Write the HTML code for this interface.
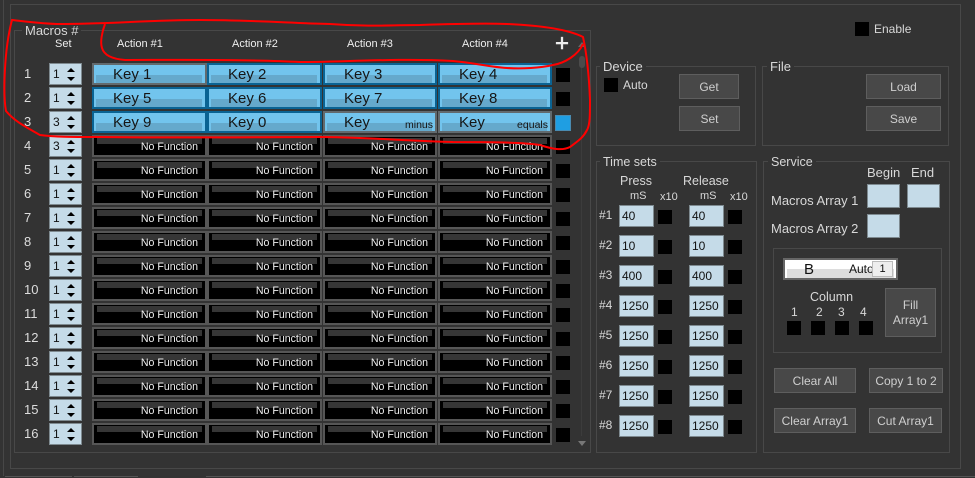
<!DOCTYPE html>
<html><head><meta charset="utf-8"><style>
html,body{margin:0;padding:0}
body{width:975px;height:478px;background:#333;overflow:hidden;position:relative;font-family:"Liberation Sans",sans-serif;color:#d8d8d8;font-size:12px}
div,span,u,i{position:absolute;box-sizing:border-box;text-decoration:none;font-style:normal;white-space:nowrap}
.g{border:1px solid #484848}
.t{background:#333;padding:0 3px;line-height:14px;font-size:13px}
.r{left:0;width:600px;height:22px}
.n{left:24px;top:3px;font-size:13px;line-height:15px;color:#ddd}
.sp{left:49px;top:0;width:33px;height:22px;background:#c5dbe8;border:1px solid #7e8a90;color:#111;font-size:12px;line-height:20px;padding-left:3px}
.sp:before,.sp:after{content:"";position:absolute;left:17px;border-left:4px solid transparent;border-right:4px solid transparent}
.sp:before{top:4px;border-bottom:4px solid #000}
.sp:after{top:13px;border-top:4px solid #000}
.f,.b{top:0;height:22px;width:115px}
.c1{left:92px}.c2{left:207px}.c3{left:323px;width:114px}.c4{left:438px;width:114px}
.f{border:2px solid #565656;background:linear-gradient(#363636,#363636) 3px 1px/calc(100% - 6px) 6px no-repeat,#000;color:#f0f0f0;font-size:10.6px;text-align:right;padding-right:7px;line-height:20px}
.b{border:2px solid #0a6393;background:linear-gradient(#65a9cc,#65a9cc) 2px 10px/calc(100% - 5px) 8px no-repeat,#72c4ed;color:#161616;font-size:15px;padding-left:19px;line-height:20px}
.o{border-color:#626a6e}
.b em{position:absolute;font-style:normal;font-size:10.5px;right:2px;top:5px;line-height:14px}
.k{width:14px;height:14px;background:#000}
.c{left:556px;top:5px}
.in{width:35px;height:22px;background:#c5dbe8;border:1px solid #7e8a90;color:#111;line-height:20px;padding-left:2px;font-size:12px}
.bt{background:#484848;border:1px solid #5e5e5e;color:#cfcfcf;text-align:center;font-size:12px;line-height:24px}
.l{line-height:14px}
.a{top:37px;font-size:11px;line-height:14px;color:#eee}
</style></head><body>
<div style="left:3px;top:-2px;width:1px;height:478px;background:#474747"></div>
<div class="g" style="left:10px;top:4px;width:951px;height:465px"></div>
<div style="left:5px;top:476px;width:67px;height:1px;background:#555"></div>
<div style="left:74px;top:476px;width:64px;height:1px;background:#555"></div>
<div style="left:206px;top:476px;width:769px;height:1px;background:#555"></div>

<div class="g" style="left:14px;top:30px;width:577px;height:423px"></div>
<div class="t" style="left:22px;top:24px">Macros #</div>
<span class="a" style="left:55px">Set</span>
<span class="a" style="left:117px">Action #1</span>
<span class="a" style="left:232px">Action #2</span>
<span class="a" style="left:347px">Action #3</span>
<span class="a" style="left:462px">Action #4</span>
<span style="left:555px;top:30px;font-size:24px;line-height:28px;color:#eee;-webkit-text-stroke:.5px #eee">+</span>
<div style="left:578px;top:42px;width:0;height:0;border-left:4px solid transparent;border-right:4px solid transparent;border-bottom:5px solid #666"></div>
<div style="left:581px;top:56px;width:1px;height:380px;background:#3c3c3c"></div>
<div style="left:579px;top:56px;width:6px;height:12px;background:#4b4b4b;border-radius:3px"></div>
<div style="left:578px;top:441px;width:0;height:0;border-left:4px solid transparent;border-right:4px solid transparent;border-top:5px solid #777"></div>

<div class="r" style="top:63px"><i class="n">1</i><div class="sp">1</div><div class="b c1 o">Key 1</div><div class="b c2">Key 2</div><div class="b c3">Key 3</div><div class="b c4">Key 4</div><u class="k c"></u></div>
<div class="r" style="top:87px"><i class="n">2</i><div class="sp">1</div><div class="b c1">Key 5</div><div class="b c2">Key 6</div><div class="b c3">Key 7</div><div class="b c4">Key 8</div><u class="k c"></u></div>
<div class="r" style="top:111px"><i class="n">3</i><div class="sp">3</div><div class="b c1">Key 9</div><div class="b c2">Key 0</div><div class="b c3 o">Key<em>minus</em></div><div class="b c4 o">Key<em>equals</em></div><u class="k c" style="left:555px;top:4px;width:16px;height:16px;background:#1f9ee2;border:1px solid #4a8bb0"></u></div>
<div class="r" style="top:135px"><i class="n">4</i><div class="sp">3</div><div class="f c1">No Function</div><div class="f c2">No Function</div><div class="f c3">No Function</div><div class="f c4">No Function</div><u class="k c"></u></div>
<div class="r" style="top:159px"><i class="n">5</i><div class="sp">1</div><div class="f c1">No Function</div><div class="f c2">No Function</div><div class="f c3">No Function</div><div class="f c4">No Function</div><u class="k c"></u></div>
<div class="r" style="top:183px"><i class="n">6</i><div class="sp">1</div><div class="f c1">No Function</div><div class="f c2">No Function</div><div class="f c3">No Function</div><div class="f c4">No Function</div><u class="k c"></u></div>
<div class="r" style="top:207px"><i class="n">7</i><div class="sp">1</div><div class="f c1">No Function</div><div class="f c2">No Function</div><div class="f c3">No Function</div><div class="f c4">No Function</div><u class="k c"></u></div>
<div class="r" style="top:231px"><i class="n">8</i><div class="sp">1</div><div class="f c1">No Function</div><div class="f c2">No Function</div><div class="f c3">No Function</div><div class="f c4">No Function</div><u class="k c"></u></div>
<div class="r" style="top:255px"><i class="n">9</i><div class="sp">1</div><div class="f c1">No Function</div><div class="f c2">No Function</div><div class="f c3">No Function</div><div class="f c4">No Function</div><u class="k c"></u></div>
<div class="r" style="top:279px"><i class="n">10</i><div class="sp">1</div><div class="f c1">No Function</div><div class="f c2">No Function</div><div class="f c3">No Function</div><div class="f c4">No Function</div><u class="k c"></u></div>
<div class="r" style="top:303px"><i class="n">11</i><div class="sp">1</div><div class="f c1">No Function</div><div class="f c2">No Function</div><div class="f c3">No Function</div><div class="f c4">No Function</div><u class="k c"></u></div>
<div class="r" style="top:327px"><i class="n">12</i><div class="sp">1</div><div class="f c1">No Function</div><div class="f c2">No Function</div><div class="f c3">No Function</div><div class="f c4">No Function</div><u class="k c"></u></div>
<div class="r" style="top:351px"><i class="n">13</i><div class="sp">1</div><div class="f c1">No Function</div><div class="f c2">No Function</div><div class="f c3">No Function</div><div class="f c4">No Function</div><u class="k c"></u></div>
<div class="r" style="top:375px"><i class="n">14</i><div class="sp">1</div><div class="f c1">No Function</div><div class="f c2">No Function</div><div class="f c3">No Function</div><div class="f c4">No Function</div><u class="k c"></u></div>
<div class="r" style="top:399px"><i class="n">15</i><div class="sp">1</div><div class="f c1">No Function</div><div class="f c2">No Function</div><div class="f c3">No Function</div><div class="f c4">No Function</div><u class="k c"></u></div>
<div class="r" style="top:423px"><i class="n">16</i><div class="sp">1</div><div class="f c1">No Function</div><div class="f c2">No Function</div><div class="f c3">No Function</div><div class="f c4">No Function</div><u class="k c"></u></div>

<u class="k" style="left:855px;top:22px"></u><span class="l" style="left:874px;top:22px">Enable</span>

<div class="g" style="left:596px;top:66px;width:160px;height:80px"></div>
<div class="t" style="left:600px;top:60px">Device</div>
<u class="k" style="left:604px;top:78px"></u><span class="l" style="left:623px;top:78px">Auto</span>
<div class="bt" style="left:679px;top:74px;width:60px;height:25px">Get</div>
<div class="bt" style="left:679px;top:106px;width:61px;height:25px">Set</div>

<div class="g" style="left:762px;top:66px;width:187px;height:80px"></div>
<div class="t" style="left:767px;top:60px">File</div>
<div class="bt" style="left:866px;top:74px;width:75px;height:25px">Load</div>
<div class="bt" style="left:866px;top:106px;width:75px;height:25px">Save</div>

<div class="g" style="left:596px;top:161px;width:161px;height:292px"></div>
<div class="t" style="left:600px;top:155px;font-size:12.5px">Time sets</div>
<span class="l" style="left:620px;top:174px;font-size:12.5px">Press</span>
<span class="l" style="left:683px;top:174px;font-size:12.5px">Release</span>
<span class="l" style="left:630px;top:189px;font-size:11px">mS</span>
<span class="l" style="left:660px;top:190px;font-size:11px">x10</span>
<span class="l" style="left:700px;top:189px;font-size:11px">mS</span>
<span class="l" style="left:730px;top:190px;font-size:11px">x10</span>

<span class="l" style="left:599px;top:208px">#1</span><div class="in" style="left:619px;top:205px">40</div><u class="k" style="left:658px;top:210px"></u><div class="in" style="left:689px;top:205px">40</div><u class="k" style="left:728px;top:210px"></u>
<span class="l" style="left:599px;top:238px">#2</span><div class="in" style="left:619px;top:235px">10</div><u class="k" style="left:658px;top:240px"></u><div class="in" style="left:689px;top:235px">10</div><u class="k" style="left:728px;top:240px"></u>
<span class="l" style="left:599px;top:268px">#3</span><div class="in" style="left:619px;top:265px">400</div><u class="k" style="left:658px;top:270px"></u><div class="in" style="left:689px;top:265px">400</div><u class="k" style="left:728px;top:270px"></u>
<span class="l" style="left:599px;top:298px">#4</span><div class="in" style="left:619px;top:295px">1250</div><u class="k" style="left:658px;top:300px"></u><div class="in" style="left:689px;top:295px">1250</div><u class="k" style="left:728px;top:300px"></u>
<span class="l" style="left:599px;top:328px">#5</span><div class="in" style="left:619px;top:325px">1250</div><u class="k" style="left:658px;top:330px"></u><div class="in" style="left:689px;top:325px">1250</div><u class="k" style="left:728px;top:330px"></u>
<span class="l" style="left:599px;top:358px">#6</span><div class="in" style="left:619px;top:355px">1250</div><u class="k" style="left:658px;top:360px"></u><div class="in" style="left:689px;top:355px">1250</div><u class="k" style="left:728px;top:360px"></u>
<span class="l" style="left:599px;top:388px">#7</span><div class="in" style="left:619px;top:385px">1250</div><u class="k" style="left:658px;top:390px"></u><div class="in" style="left:689px;top:385px">1250</div><u class="k" style="left:728px;top:390px"></u>
<span class="l" style="left:599px;top:418px">#8</span><div class="in" style="left:619px;top:415px">1250</div><u class="k" style="left:658px;top:420px"></u><div class="in" style="left:689px;top:415px">1250</div><u class="k" style="left:728px;top:420px"></u>

<div class="g" style="left:763px;top:161px;width:187px;height:292px"></div>
<div class="t" style="left:768px;top:155px;font-size:12.5px">Service</div>
<span class="l" style="left:867px;top:166px;font-size:13px">Begin</span>
<span class="l" style="left:911px;top:166px;font-size:13px">End</span>
<span class="l" style="left:771px;top:194px;font-size:13px">Macros Array 1</span>
<span class="l" style="left:771px;top:222px;font-size:13px">Macros Array 2</span>
<div class="in" style="left:867px;top:184px;width:33px;height:24px"></div>
<div class="in" style="left:907px;top:184px;width:33px;height:24px"></div>
<div class="in" style="left:867px;top:214px;width:33px;height:24px"></div>

<div class="g" style="left:773px;top:248px;width:169px;height:105px"></div>
<div style="left:783px;top:258px;width:115px;height:22px;border:2px solid #666;background:linear-gradient(#ddd,#ddd) 2px 9px/calc(100% - 4px) 9px no-repeat,#fff"></div>
<span style="left:804px;top:261px;font-size:15px;line-height:17px;color:#111">B</span>
<span style="left:849px;top:262px;font-size:12px;line-height:14px;color:#111">Auto</span>
<div style="left:872px;top:261px;width:21px;height:16px;background:#eee;border:1px solid #bbb;color:#111;font-size:11px;line-height:14px;text-align:center">1</div>
<span class="l" style="left:810px;top:290px;font-size:12.5px">Column</span>
<span class="l" style="left:791px;top:305px">1</span><span class="l" style="left:816px;top:305px">2</span><span class="l" style="left:838px;top:305px">3</span><span class="l" style="left:860px;top:305px">4</span>
<u class="k" style="left:787px;top:321px"></u><u class="k" style="left:811px;top:321px"></u><u class="k" style="left:835px;top:321px"></u><u class="k" style="left:859px;top:321px"></u>
<div class="bt" style="left:885px;top:288px;width:51px;height:49px;line-height:15px;padding-top:9px">Fill<br>Array1</div>

<div class="bt" style="left:774px;top:368px;width:82px;height:25px">Clear All</div>
<div class="bt" style="left:869px;top:368px;width:74px;height:25px">Copy 1 to 2</div>
<div class="bt" style="left:774px;top:408px;width:82px;height:25px">Clear Array1</div>
<div class="bt" style="left:869px;top:408px;width:73px;height:25px">Cut Array1</div>

<svg width="975" height="478" style="position:absolute;left:0;top:0" fill="none" stroke="#f00" stroke-width="2">
<path d="M12 20C30 22 45 24 60 24C110 24 150 20 200 20C250 20 290 23 330 24C370 27 395 25 420 25C450 24 480 23 507 24C530 25 565 28 583 37C587 55 589 75 590 100C590 115 590 125 587 130C583 138 578 141 570 147C562 151 552 149 540 145C520 142 480 142 453 142C410 141 360 137 320 137C260 137 190 138 100 137C70 137 55 137 40 135C28 128 15 122 6 111C3 95 4 50 12 20Z"/>
<path d="M105 24C102 32 100 42 102 48C104 55 112 59 125 60C170 60 250 59 300 62C340 62 400 58 453 61C475 63 490 67 507 68C522 69 540 68 553 65C565 63 578 55 583 44"/>
</svg>
</body></html>
